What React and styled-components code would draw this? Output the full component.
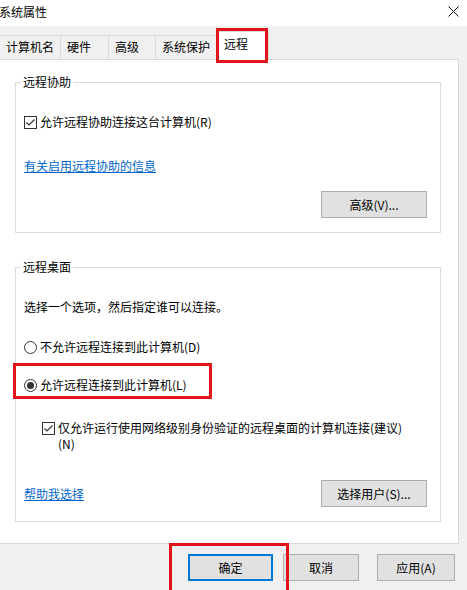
import React from "react";
import styled, { createGlobalStyle, css } from "styled-components";

const GlobalStyle = createGlobalStyle`
  body {
    margin: 0;
    background: #f0f0f0;
    font-family: "Noto Sans CJK SC", "Liberation Sans", sans-serif;
    font-size: 12px;
    color: #000;
  }
`;

const Window = styled.div`
  width: 467px;
  height: 590px;
  overflow: hidden;
  background: #f0f0f0;
`;

const TitleBar = styled.div`
  height: 26px;
  background: #ffffff;
  display: flex;
  align-items: center;
  justify-content: space-between;
  padding: 0 8px 3px 0;
  box-sizing: border-box;
  line-height: 16px;
`;

const Title = styled.span`
  margin-left: -1px;
`;

const TabRow = styled.div`
  display: flex;
  align-items: flex-end;
  height: 29px;
  margin: 5px 0 -1px -1px;
  position: relative;
  z-index: 1;
`;

const Tab = styled.div`
  width: ${(p) => p.$w}px;
  box-sizing: border-box;
  margin-right: -1px;
  padding-left: 6px;
  border: 1px solid #d9d9d9;
  border-bottom: none;
  line-height: 22px;
  ${(p) =>
    p.$active
      ? css`
          height: 29px;
          background: #ffffff;
          line-height: 24px;
        `
      : css`
          height: 24px;
          margin-bottom: 1px;
          background: #f0f0f0;
        `}
`;

const Highlight = styled.div`
  position: relative;
  display: inline-flex;
  &::after {
    content: "";
    position: absolute;
    top: ${(p) => p.$t}px;
    left: ${(p) => p.$l}px;
    right: ${(p) => p.$r}px;
    bottom: ${(p) => p.$b}px;
    border: 3px solid #e3131b;
    pointer-events: none;
  }
`;

const Panel = styled.div`
  margin-left: -1px;
  width: 460px;
  box-sizing: border-box;
  background: #ffffff;
  border: 1px solid #d9d9d9;
  padding: 0 17px 21px 15px;
  display: flex;
  flex-direction: column;
`;

const Group = styled.fieldset`
  margin: ${(p) => p.$mt}px 0 0 0;
  padding: 0 13px 14px 8px;
  border: 1px solid #dcdcdc;
  display: flex;
  flex-direction: column;
  align-items: flex-start;
  min-width: 0;
`;

const Legend = styled.legend`
  padding: 0 2px;
  margin-left: -3px;
  line-height: 16px;
`;

const Row = styled.div`
  display: flex;
  align-items: ${(p) => (p.$top ? "flex-start" : "center")};
  gap: 3px;
  line-height: 16px;
  margin-top: ${(p) => p.$mt || 0}px;
  margin-left: ${(p) => p.$ml || 0}px;
  white-space: nowrap;
`;

const Text = styled.span`
  line-height: 16px;
`;

const LinkText = styled.a`
  color: #0066cc;
  text-decoration: underline;
  line-height: 16px;
  cursor: pointer;
`;

const ButtonLine = styled.div`
  align-self: stretch;
  display: flex;
  align-items: center;
  justify-content: ${(p) => (p.$split ? "space-between" : "flex-end")};
  margin-top: ${(p) => p.$mt}px;
`;

const Button = styled.button`
  width: ${(p) => p.$w}px;
  height: 27px;
  box-sizing: border-box;
  background: #e1e1e1;
  border: 1px solid #adadad;
  font-family: inherit;
  font-size: 12px;
  color: #000;
  padding: 0;
  line-height: 16px;
  margin-left: ${(p) => p.$ml || 0}px;
  ${(p) =>
    p.$default &&
    css`
      border: 2px solid #0078d7;
    `}
`;

const Footer = styled.div`
  display: flex;
  justify-content: flex-end;
  align-items: center;
  padding: 10px 12px 0 0;
  gap: 10px;
`;

const BoxIcon = styled.svg`
  flex: none;
  margin-top: ${(p) => p.$mt || 0}px;
`;

const CheckBox = ({ mt }) => (
  <BoxIcon width="13" height="13" viewBox="0 0 13 13" $mt={mt}>
    <rect x="0.5" y="0.5" width="12" height="12" fill="#fff" stroke="#333" />
    <path d="M2.5 6.5 L5 9 L10.5 3.5" fill="none" stroke="#333" strokeWidth="1.2" />
  </BoxIcon>
);

const Radio = ({ on }) => (
  <BoxIcon width="13" height="13" viewBox="0 0 13 13">
    <circle cx="6.5" cy="6.5" r="6" fill="#fff" stroke="#333" />
    {on && <circle cx="6.5" cy="6.5" r="3.5" fill="#333" />}
  </BoxIcon>
);

const CloseIcon = () => (
  <svg width="11" height="11" viewBox="0 0 11 11">
    <path d="M0.5 0.5 L10.5 10.5 M10.5 0.5 L0.5 10.5" stroke="#111" strokeWidth="1" />
  </svg>
);

const tabs = [
  { label: "计算机名", w: 62 },
  { label: "硬件", w: 49 },
  { label: "高级", w: 48 },
  { label: "系统保护", w: 63 },
];

export default function App() {
  return (
    <Window>
      <GlobalStyle />
      <TitleBar>
        <Title>系统属性</Title>
        <CloseIcon />
      </TitleBar>
      <TabRow>
        {tabs.map((t) => (
          <Tab key={t.label} $w={t.w}>
            {t.label}
          </Tab>
        ))}
        <Highlight $t={-3} $l={-1} $r={0} $b={-3}>
          <Tab $w={52} $active>
            远程
          </Tab>
        </Highlight>
      </TabRow>
      <Panel>
        <Group $mt={14}>
          <Legend>远程协助</Legend>
          <Row $mt={24}>
            <CheckBox />
            <Text>允许远程协助连接这台计算机(R)</Text>
          </Row>
          <Row $mt={28}>
            <LinkText>有关启用远程协助的信息</LinkText>
          </Row>
          <ButtonLine $mt={17}>
            <Button $w={106}>高级(V)...</Button>
          </ButtonLine>
        </Group>
        <Group $mt={26}>
          <Legend>远程桌面</Legend>
          <Row $mt={24}>
            <Text>选择一个选项，然后指定谁可以连接。</Text>
          </Row>
          <Row $mt={24}>
            <Radio />
            <Text>不允许远程连接到此计算机(D)</Text>
          </Row>
          <Highlight $t={-14} $l={-11} $r={-25} $b={-6} style={{ marginTop: 22 }}>
            <Row>
              <Radio on />
              <Text>允许远程连接到此计算机(L)</Text>
            </Row>
          </Highlight>
          <Row $mt={27} $ml={18} $top>
            <CheckBox mt={2} />
            <Text>
              仅允许运行使用网络级别身份验证的远程桌面的计算机连接(建议)
              <br />
              (N)
            </Text>
          </Row>
          <ButtonLine $mt={28} $split>
            <LinkText>帮助我选择</LinkText>
            <Button $w={106}>选择用户(S)...</Button>
          </ButtonLine>
        </Group>
      </Panel>
      <Footer>
        <Highlight $t={-11} $l={-19} $r={-16} $b={-12}>
          <Button $w={85} $default>
            确定
          </Button>
        </Highlight>
        <Button $w={76}>取消</Button>
        <Button $w={78} $ml={8}>
          应用(A)
        </Button>
      </Footer>
    </Window>
  );
}
